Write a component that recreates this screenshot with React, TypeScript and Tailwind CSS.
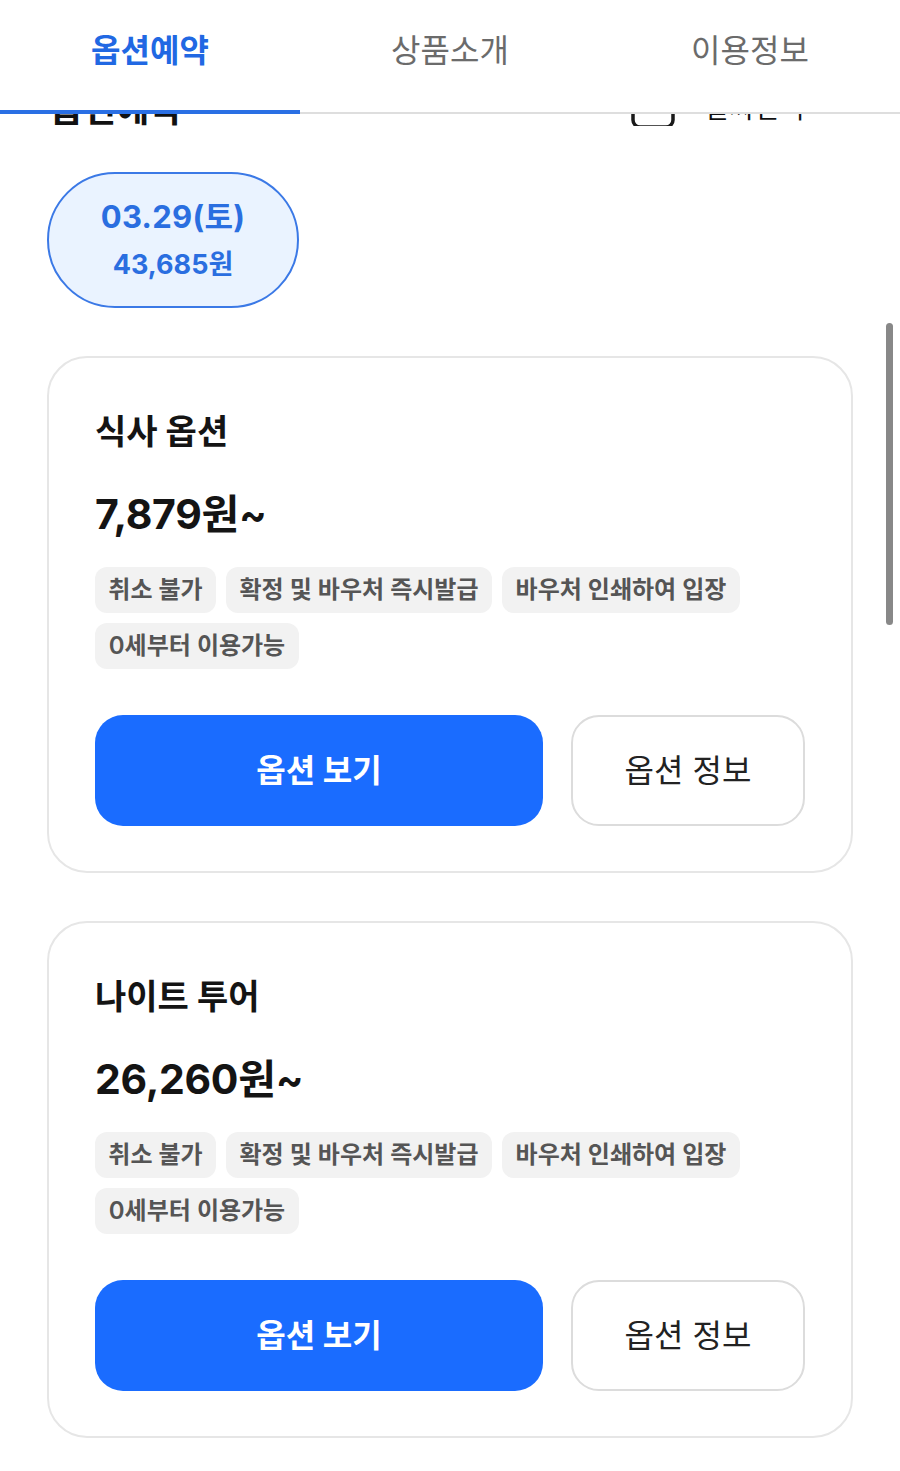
import React from "react";

type Opt = { title: string; price: string };

const TAGS: { label: string; w: string }[] = [
  { label: "취소 불가", w: "w-[121px]" },
  { label: "확정 및 바우처 즉시발급", w: "w-[266px]" },
  { label: "바우처 인쇄하여 입장", w: "w-[238px]" },
  { label: "0세부터 이용가능", w: "w-[204px]" },
];

function OptionCard({ opt }: { opt: Opt }) {
  return (
    <div className="border-2 border-[#e6e6e6] rounded-[40px] px-[46px] pt-[52px] pb-[45px] bg-white">
      <div className="text-[34px] leading-[44px] font-bold text-[#141414]">{opt.title}</div>
      <div className="mt-[36px] text-[41px] leading-[48px] font-bold text-[#141414] tracking-[-0.3px]">{opt.price}</div>
      <div className="mt-[29px] flex flex-wrap gap-[10px] w-[680px]">
        {TAGS.map((t) => (
          <div
            key={t.label}
            className={`${t.w} h-[46px] rounded-[12px] bg-[#f2f2f2] flex items-center justify-center text-[24px] font-semibold text-[#555555]`}
          >
            {t.label}
          </div>
        ))}
      </div>
      <div className="mt-[46px] flex gap-[28px]">
        <button className="w-[448px] h-[111px] rounded-[28px] bg-[#1a6cff] text-white text-[32px] font-bold flex items-center justify-center">
          옵션 보기
        </button>
        <button className="w-[234px] h-[111px] rounded-[28px] border-2 border-[#dcdcdc] bg-white text-[#222222] text-[32px] font-normal flex items-center justify-center">
          옵션 정보
        </button>
      </div>
    </div>
  );
}

export default function App() {
  const opts: Opt[] = [
    { title: "식사 옵션", price: "7,879원~" },
    { title: "나이트 투어", price: "26,260원~" },
  ];
  return (
    <div className="relative w-[900px] min-h-[1471px] bg-white overflow-hidden font-['Inter','Noto_Sans_CJK_KR',sans-serif]">
      {/* tab bar */}
      <div className="flex h-[110px]">
        <div className="w-[300px] flex items-center justify-center pb-[8px] text-[32px] font-bold text-[#2168e3]">옵션예약</div>
        <div className="w-[300px] flex items-center justify-center pb-[8px] text-[32px] font-normal text-[#6b6b6b]">상품소개</div>
        <div className="w-[300px] flex items-center justify-center pb-[8px] text-[32px] font-normal text-[#6b6b6b]">이용정보</div>
      </div>
      <div className="flex items-end h-[4px]">
        <div className="w-[300px] h-[4px] bg-[#2a6fe4]"></div>
        <div className="flex-1 h-[2px] bg-[#dedede]"></div>
      </div>
      {/* scrolled content peeking under the header */}
      <div className="h-[12px] overflow-hidden" aria-hidden="true">
        <div className="-mt-[25px] h-[40px] flex items-center justify-between pl-[50px] pr-[96px]">
          <div className="text-[36px] leading-[40px] font-bold text-[#111111]">옵션예약</div>
          <div className="flex items-center gap-[30px]">
            <svg width="44" height="40" viewBox="0 0 44 40" fill="none">
              <rect x="2" y="2" width="40" height="36" rx="7" stroke="#1a1a1a" strokeWidth="3.5" />
            </svg>
            <div className="text-[27px] leading-[40px] text-[#111111]">날짜선택</div>
          </div>
        </div>
      </div>
      {/* date pill */}
      <div className="mt-[46px] ml-[47px] w-[252px] h-[136px] rounded-full border-2 border-[#3b79e6] bg-[#eaf3ff] flex flex-col items-center justify-center gap-[10px]">
        <div className="text-[31px] leading-[40px] font-bold text-[#2a6ee0] tracking-[0.3px]">03.29(토)</div>
        <div className="text-[27px] leading-[36px] font-bold text-[#2a6ee0]">43,685원</div>
      </div>
      {/* option cards */}
      <div className="mt-[48px] mx-[47px] flex flex-col gap-[48px]">
        {opts.map((o) => (
          <OptionCard key={o.title} opt={o} />
        ))}
      </div>
      {/* scrollbar overlay */}
      <div className="absolute right-[7px] top-[323px] w-[7px] h-[302px] rounded-full bg-[#888888]"></div>
    </div>
  );
}
